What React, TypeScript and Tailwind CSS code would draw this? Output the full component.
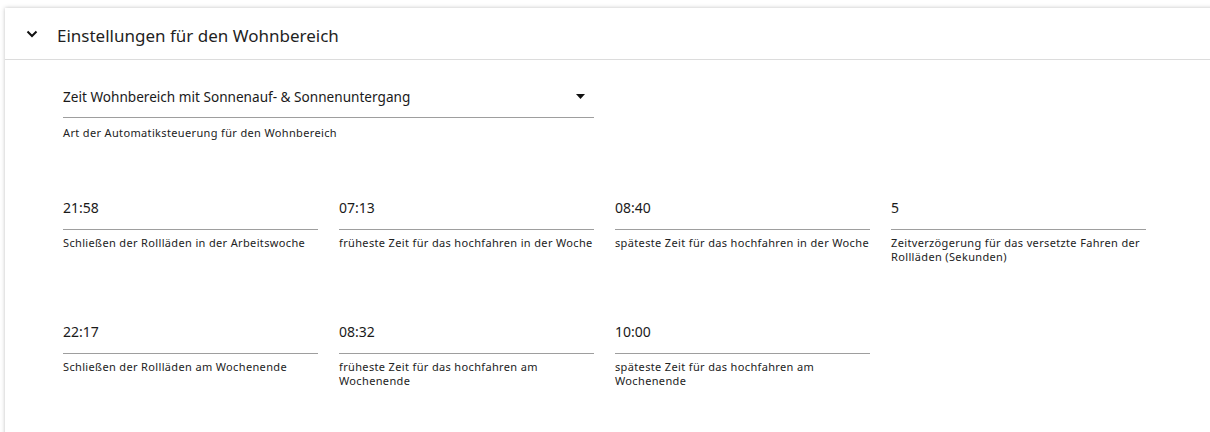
import React from "react";

const font = { fontFamily: '"Noto Sans", "Open Sans", sans-serif' };

type Field = { value: string; label: string };

const row1: Field[] = [
  { value: "21:58", label: "Schließen der Rollläden in der Arbeitswoche" },
  { value: "07:13", label: "früheste Zeit für das hochfahren in der Woche" },
  { value: "08:40", label: "späteste Zeit für das hochfahren in der Woche" },
  { value: "5", label: "Zeitverzögerung für das versetzte Fahren der Rollläden (Sekunden)" },
];
const row2: Field[] = [
  { value: "22:17", label: "Schließen der Rollläden am Wochenende" },
  { value: "08:32", label: "früheste Zeit für das hochfahren am Wochenende" },
  { value: "10:00", label: "späteste Zeit für das hochfahren am Wochenende" },
];

function FieldBox({ f }: { f: Field }) {
  return (
    <div className="w-[255px] flex flex-col">
      <div className="h-[31px] border-b border-[#9e9e9e] text-[14px] leading-[18px] text-[#1a1a1a]">
        {f.value}
      </div>
      <div className="pt-[6px] text-[11px] leading-[14px] text-[#222] tracking-[0.35px]">{f.label}</div>
    </div>
  );
}

export default function App() {
  return (
    <div className="w-[1210px] h-[432px] bg-white overflow-hidden pl-[5px] pt-[8px]" style={font}>
      <div className="w-[1215px] h-[440px] bg-white shadow-[0_0_4px_rgba(0,0,0,0.25)] flex flex-col">
        <div className="h-[52px] flex items-center border-b border-[#dcdcdc]">
          <div className="w-[52px] flex justify-center pl-[2px]">
            <svg width="12" height="8" viewBox="0 0 12 8">
              <path d="M1.5 1.5 L6 6 L10.5 1.5" fill="none" stroke="#111" strokeWidth="2" />
            </svg>
          </div>
          <div className="text-[17px] text-[#1f1f1f] pt-[5px]">Einstellungen für den Wohnbereich</div>
        </div>
        <div className="pl-[58px] pt-[28px]">
          <div className="w-[531px] h-[30px] border-b border-[#9e9e9e] flex items-start justify-between">
            <span className="text-[13.6px] leading-[18px] text-[#1a1a1a]">
              Zeit Wohnbereich mit Sonnenauf- &amp; Sonnenuntergang
            </span>
            <svg width="9" height="6" viewBox="0 0 9 6" className="mr-[9px] mt-[6px]">
              <path d="M0 0 H9 L4.5 5 Z" fill="#111" />
            </svg>
          </div>
          <div className="pt-[8px] text-[11px] leading-[14px] text-[#222] tracking-[0.35px]">
            Art der Automatiksteuerung für den Wohnbereich
          </div>
          <div className="mt-[59px] flex gap-[21px]">
            {row1.map((f) => (
              <FieldBox key={f.value} f={f} />
            ))}
          </div>
          <div className="mt-[59px] flex gap-[21px]">
            {row2.map((f) => (
              <FieldBox key={f.value} f={f} />
            ))}
          </div>
        </div>
      </div>
    </div>
  );
}
